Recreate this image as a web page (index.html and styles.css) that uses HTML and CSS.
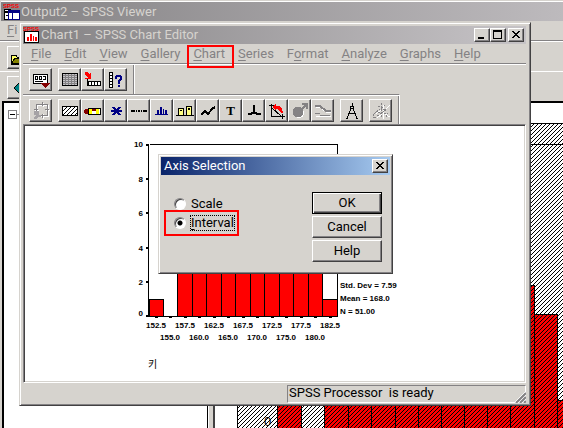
FILE: index.html
```html
<!DOCTYPE html>
<html lang="en">
<head>
<meta charset="utf-8">
<title>SPSS Viewer</title>
<link rel="stylesheet" href="styles.css">
</head>
<body>
<main class="viewer">
  <header class="titlebar">
    <svg class="app-icon" width="18" height="18" shape-rendering="crispEdges"><text class="logo-text" x="0" y="5">SPSS</text><path fill="#fff" stroke="#000" d="M1.500 6.500h6v10h-6z"/><path d="M2 8h4v2H2zM3 12h4v1H3z" fill="#000"/><path fill="#fff" stroke="#000084" d="M5.500 8.500h11v8h-11z"/><path fill="#000084" d="M5 7h12v3H5zM9 8h1v9H9z"/></svg>
    <h1>Output2 – SPSS Viewer</h1>
  </header>
  <nav class="viewer-menu"><button type="button"><u>F</u>i</button></nav>
  <div class="viewer-tools">
    <button type="button" class="tool" aria-label="Open"><svg width="18" height="18" shape-rendering="crispEdges"><path d="M1 6h5l1 2h6v7H1z" fill="#ffff63" stroke="#000"/><path d="M2 14l3-5h12l-3 5z" fill="#848200" stroke="#000"/></svg></button>
  </div>
  <div class="viewer-tools">
    <button type="button" class="tool" aria-label="Back"><svg width="18" height="18"><path d="M4 9l7-7v4h7v6h-7v4z" fill="#008284" stroke="#000"/></svg></button>
  </div>
  <div class="viewer-body">
    <aside class="outline"><svg width="14" height="24" shape-rendering="crispEdges"><path fill="none" stroke="#848284" d="M0.500 5.500h8v8h-8zM9 9.500h5"/><path stroke="#000" d="M2 9.500h5"/></svg></aside>
    <div class="splitter"></div>
    <section class="output">
      <svg width="100%" height="100%" shape-rendering="crispEdges">
        <defs><pattern id="hatch" width="4" height="4" patternUnits="userSpaceOnUse"><path d="M3 0h1v1H3zM2 1h1v1H2zM1 2h1v1H1zM0 3h1v1H0z"/></pattern></defs>
        <rect x="22" y="20" width="600" height="400" fill="#fff"/>
        <g fill="#f00" stroke="#000">
          <path d="M62.500 400V280.500h24V400M109.500 400V182.500h210V400M319.500 400V211.500h23V400M342.500 400V297.500h24V400M133.500 300V400M156.500 300V400M180.500 300V400M203.500 300V400M226.500 300V400M249.500 300V400M272.500 300V400M295.500 300V400"/>
        </g>
        <rect x="22" y="20" width="600" height="400" fill="url(#hatch)"/>
        <path d="M22.500 400V20.500H600M22 41.500H600" fill="none" stroke="#000"/>
        <text x="49" y="323" class="big-tick">0</text>
      </svg>
    </section>
  </div>
</main>

<section class="editor window" aria-label="Chart Editor">
  <header class="titlebar">
    <svg class="app-icon" width="18" height="18" shape-rendering="crispEdges"><text class="logo-text" x="0" y="5">SPSS</text><path fill="#fff" stroke="#000" d="M1.500 5.500h14v11h-14z"/><path fill="#f00" d="M4 11h2v4H4zM7 8h2v7H7zM10 10h1v5h-1zM12 11h2v4h-2z"/></svg>
    <h2>Chart1 – SPSS Chart Editor</h2>
    <div class="controls">
      <button type="button" class="cap" aria-label="Minimize"><svg width="12" height="10" shape-rendering="crispEdges"><path d="M2 7h6v2H2z"/></svg></button>
      <button type="button" class="cap" aria-label="Maximize"><svg width="12" height="10" shape-rendering="crispEdges"><path d="M1 0h9v9H1zM2 2v6h7V2z" fill-rule="evenodd"/></svg></button>
      <button type="button" class="cap close" aria-label="Close"><svg width="12" height="10" shape-rendering="crispEdges"><path d="M2 1h2v1H2zM8 1h2v1H8zM3 2h2v1H3zM7 2h2v1H7zM4 3h4v1H4zM5 4h2v1H5zM4 5h4v1H4zM3 6h2v1H3zM7 6h2v1H7zM2 7h2v1H2zM8 7h2v1H8z"/></svg></button>
    </div>
  </header>
  <nav class="menu">
    <button type="button"><u>F</u>ile</button><button type="button"><u>E</u>dit</button><button type="button"><u>V</u>iew</button><button type="button"><u>G</u>allery</button><button type="button" class="marked"><u>C</u>hart</button><button type="button"><u>S</u>eries</button><button type="button">F<u>o</u>rmat</button><button type="button"><u>A</u>nalyze</button><button type="button"><u>G</u>raphs</button><button type="button"><u>H</u>elp</button>
  </nav>
  <div class="toolbar first">
    <div class="group"><button type="button" class="tool" aria-label="Dialog recall"><svg width="18" height="18" shape-rendering="crispEdges"><path fill="#fff" stroke="#000" d="M1.500 3.500h14v9h-14z"/><path fill="none" stroke="#000" d="M3.500 5.500h2v3h-2zM7.500 5.500h2v3h-2zM11 5.500h2.500v3H11M3 10.500h8"/><path fill="#840000" d="M9 12h9l-4 5h-1z"/></svg></button></div>
    <div class="group">
      <button type="button" class="tool" aria-label="Data"><svg width="18" height="18" shape-rendering="crispEdges"><path fill="#c6c3c6" stroke="#000" d="M1.500 2.500h15v12h-15z"/><path stroke="#848284" fill="none" d="M2 4.500h14M2 6.500h14M2 8.500h14M2 10.500h14M2 12.500h14M4.500 3v11M7.500 3v11M10.500 3v11M13.500 3v11"/></svg></button>
      <button type="button" class="tool" aria-label="Go to case"><svg width="18" height="18" shape-rendering="crispEdges"><path fill="#f00" d="M1 1h2l3 3V2h1v6H1V7h3L1 3z"/><path fill="#fff" stroke="#000" d="M4.500 10.500h12v4h-12z"/><path stroke="#000" d="M3.500 8v7M7.500 11v4M10.500 11v4M13.500 11v4"/></svg></button>
      <button type="button" class="tool" aria-label="Variables"><svg width="18" height="18" shape-rendering="crispEdges"><path fill="#fff" stroke="#000" d="M2.500 1.500h3v15h-3zM2 4.500h4M2 7.500h4M2 10.500h4M2 13.500h4"/><path fill="#000084" d="M8 5h2v3H8zM9 4h5v2H9zM13 5h2v4h-2zM12 8h2v2h-2zM11 9h2v4h-2zM11 14h2v2h-2z"/></svg></button>
    </div>
  </div>
  <div class="toolbar second">
    <div class="group"><button type="button" class="tool" aria-label="Point selection"><svg width="18" height="18" shape-rendering="crispEdges"><path d="M5.500 3.500h11v11h-11zM11.500 1v4M11.500 12v5M3 8.500h4M14 8.500h4" fill="none" stroke="#fff"/><path d="M4.500 2.500h11v11h-11zM10.500 0v4M10.500 12v4M2 7.500h4M13 7.500h4" fill="none" stroke="#848284"/><path fill="#a5a2a5" d="M2 9h5v4h2v2H6l-1 2H2v-2l2-2H2z"/></svg></button></div>
    <div class="group">
      <button type="button" class="tool" aria-label="Fill pattern"><svg width="18" height="18" shape-rendering="crispEdges"><path fill="#fff" stroke="#000" d="M1.500 4.500h15v9h-15z"/><path stroke="#000" d="M2 9l4-4M2 13l8-8M6 13l8-8M10 13l6-6M14 13l2-2"/></svg></button>
      <button type="button" class="tool" aria-label="Color"><svg width="18" height="18" shape-rendering="crispEdges"><path fill="#840000" d="M1 7h3v5H1zM0 8h4v3H0z"/><path fill="#fff" stroke="#000" d="M4.500 6.500h12v6h-12z"/><path fill="#ffff00" d="M5 7h3v5H5zM12 7h3v5h-3z"/><path fill="#840000" d="M8 7h4v2H8z"/></svg></button>
      <button type="button" class="tool" aria-label="Marker"><svg width="18" height="18" shape-rendering="crispEdges"><path stroke="#000084" stroke-width="2" d="M4 9h11M6 5l7 8M13 5l-7 8"/></svg></button>
      <button type="button" class="tool" aria-label="Line style"><svg width="18" height="18" shape-rendering="crispEdges"><path d="M1 8h4v2H1zM6 8h1v2H6zM8 8h2v2H8zM11 8h1v2h-1zM13 8h4v2h-4z"/></svg></button>
      <button type="button" class="tool" aria-label="Bar style"><svg width="18" height="18" shape-rendering="crispEdges"><path fill="#000084" d="M2 12h13v1H2zM4 8h2v4H4zM7 5h2v7H7zM10 7h1v5h-1zM12 8h2v4h-2z"/></svg></button>
      <button type="button" class="tool" aria-label="Bar labels"><svg width="18" height="18" shape-rendering="crispEdges"><path fill="#ffff84" stroke="#000" d="M2.500 6.500h5v7h-5zM10.500 4.500h5v9h-5zM0 13.500h18"/><path fill="#000" d="M4 8h2v1H4zM12 6h2v2h-2z"/></svg></button>
      <button type="button" class="tool" aria-label="Interpolation"><svg width="18" height="18" shape-rendering="crispEdges"><path fill="none" stroke="#000" stroke-width="2" d="M2 13l4-4 3 3 4-5 3-2"/></svg></button>
      <button type="button" class="tool letter" aria-label="Text">T</button>
      <button type="button" class="tool" aria-label="3-D rotation"><svg width="18" height="18" shape-rendering="crispEdges"><path fill="none" stroke="#000" stroke-width="2" d="M9 3v7M9 10l-3 2H3M9 10l3 2h4"/></svg></button>
      <button type="button" class="tool" aria-label="Swap axes"><svg width="18" height="18" shape-rendering="crispEdges"><path fill="none" stroke="#000" d="M3.500 2v12.500H17M1 3.500h5M14.500 12v5M4 6l9 8"/><path fill="#f00" d="M4 5l4-4v3h3l3 3 1 4h-2l-2-3-3-1v2z"/></svg></button>
      <button type="button" class="tool" aria-label="Explode slice"><svg width="18" height="18" shape-rendering="crispEdges"><circle cx="8" cy="11" r="5" fill="#fff"/><circle cx="7" cy="10" r="5.500" fill="#848284"/><path stroke="#848284" stroke-width="2" fill="none" d="M10 8l5-5M11 2h5v5"/></svg></button>
      <button type="button" class="tool" aria-label="Break line"><svg width="18" height="18" shape-rendering="crispEdges"><path d="M2 5h4l6 5h5M2 14.500h15" stroke="#fff" fill="none"/><path stroke="#848284" stroke-width="2" fill="none" d="M1 4h5l6 5h5"/><path stroke="#848284" d="M1 11.500h5M6 13.500h10"/></svg></button>
    </div>
    <div class="group"><button type="button" class="tool" aria-label="Chart options"><svg width="18" height="18" shape-rendering="crispEdges"><path fill="none" stroke="#000" d="M9.500 1v3M7.500 4.500h3v2h-3zM8 7L4 16M10 7l4 9M3 16.500h2M13 16.500h2M6 11.500h7"/></svg></button></div>
    <div class="group"><button type="button" class="tool" aria-label="Spin"><svg width="18" height="18" shape-rendering="crispEdges"><path fill="none" stroke="#fff" d="M11 3v14M4 12l5-4M14 7l4-4M5 16l5-4M13 12l5 3"/><path fill="none" stroke="#848284" stroke-dasharray="2 1" d="M9.500 1v15M6 4l7 4M13 3L2 12M6 10l10 2M3 16l12-9M14 15l2-3M1 12v3h3"/></svg></button></div>
  </div>
  <div class="canvas">
    <svg width="100%" height="100%" role="img" aria-label="Histogram">
      <g shape-rendering="crispEdges" stroke="#000" fill="none">
        <path d="M124.500 19.500H312.500V191.500"/>
        <path fill="#f00" d="M124.500 191.500v-17h14v17M152.500 191.500V110.500h145v81M297.500 191.500v-17h15v17"/>
        <path d="M167.500 110v81M181.500 110v81M196.500 110v81M210.500 110v81M225.500 110v81M239.500 110v81M254.500 110v81M268.500 110v81M283.500 110v81"/>
        <path d="M123.500 19v173M123 191.500h190"/>
        <path stroke-width="2" d="M121 20h3M121 54h3M121 88h3M121 123h3M121 157h3M121 191h3M130 192h3M144 192h3M159 192h3M173 192h3M188 192h3M202 192h3M217 192h3M231 192h3M246 192h3M260 192h3M275 192h3M289 192h3M304 192h3"/>
      </g>
      <g class="tick end"><text x="118" y="22">10</text><text x="118" y="57">8</text><text x="118" y="91">6</text><text x="118" y="126">4</text><text x="118" y="160">2</text><text x="118" y="191">0</text></g>
      <g class="tick mid">
        <text x="131" y="203">152.5</text><text x="160" y="203">157.5</text><text x="189" y="203">162.5</text><text x="218" y="203">167.5</text><text x="247" y="203">172.5</text><text x="276" y="203">177.5</text><text x="305" y="203">182.5</text>
        <text x="145" y="215">155.0</text><text x="174" y="215">160.0</text><text x="203" y="215">165.0</text><text x="232" y="215">170.0</text><text x="261" y="215">175.0</text><text x="290" y="215">180.0</text>
      </g>
      <g class="tick"><text x="315" y="163">Std. Dev = 7.59</text><text x="315" y="176">Mean = 168.0</text><text x="315" y="189">N = 51.00</text></g>
      <text class="variable" x="123" y="243">키</text>
    </svg>
  </div>
  <footer class="status"><p>SPSS Processor&nbsp; is ready</p>
    <svg class="grip" width="12" height="12"><path stroke="#fff" d="M0 12L12 0M4 12l8-8M8 12l4-4"/><path stroke="#848284" stroke-width="2" d="M2 12L12 2M6 12l6-6M10 12l2-2"/></svg>
  </footer>
</section>

<form class="dialog window" aria-label="Axis Selection">
  <header class="titlebar active">
    <h2>Axis Selection</h2>
    <button type="button" class="cap" aria-label="Close"><svg width="12" height="10" shape-rendering="crispEdges"><path d="M2 1h2v1H2zM8 1h2v1H8zM3 2h2v1H3zM7 2h2v1H7zM4 3h4v1H4zM5 4h2v1H5zM4 5h4v1H4zM3 6h2v1H3zM7 6h2v1H7zM2 7h2v1H2zM8 7h2v1H8z"/></svg></button>
  </header>
  <div class="dialog-body">
    <div class="options">
      <label><input type="radio" name="axis"><span>Scale</span></label>
      <label class="marked"><input type="radio" name="axis" checked><span class="focus"><u>I</u>nterval</span></label>
    </div>
    <div class="actions">
      <button type="button" class="default">OK</button>
      <button type="button">Cancel</button>
      <button type="button">Help</button>
    </div>
  </div>
</form>
</body>
</html>
```
FILE: styles.css
```css
:root {
  --face: #d6d3ce;
  --shadow: #848284;
  --dark: #424142;
  --mark: #f00;
}
* { box-sizing: border-box; }
html, body { height: 100%; }
body {
  margin: 0;
  overflow: hidden;
  background: var(--face);
  font: 13px/16px Roboto, "Noto Sans CJK KR", sans-serif;
  color: #000;
}
h1, h2, p { margin: 0; font-size: 13px; font-weight: 400; }
button {
  margin: 0;
  padding: 0;
  border: 0;
  background: none;
  font: inherit;
  color: inherit;
}
svg { display: block; }
u { text-underline-offset: 2px; }

.titlebar {
  display: flex;
  align-items: center;
  height: 18px;
  flex: none;
  padding-right: 2px;
  background: linear-gradient(90deg, #848284, #c6c3c6);
  color: var(--face);
}
.titlebar.active {
  background: linear-gradient(90deg, #0a246a, #a6caf0);
  color: #fff;
  padding-left: 3px;
}
.titlebar h1, .titlebar h2 { flex: 1; white-space: nowrap; }
.app-icon { flex: none; }
.logo-text { font: bold 6px "Liberation Sans", sans-serif; fill: #f00; }

.viewer { height: 100%; display: flex; flex-direction: column; border-top: 1px solid var(--face); }
.viewer > .titlebar {
  height: 20px;
  border-top: 1px solid #fff;
  margin-left: 1px;
  padding-left: 2px;
  background: linear-gradient(90deg, #848284, #bdbabd);
}
.viewer-menu {
  height: 21px;
  flex: none;
  padding: 1px 7px;
  color: var(--shadow);
  border-bottom: 1px solid #fff;
  box-shadow: inset 0 -1px var(--shadow);
}
.viewer-tools { height: 29px; flex: none; padding: 4px 7px; }
.viewer-tools + .viewer-tools { border-top: 1px solid #fff; height: 30px; }
.viewer-body { flex: 1; min-height: 0; display: flex; border-top: 2px solid #000; margin-left: 2px; }
.outline { width: 205px; background: #fff; border-left: 2px solid #000; padding: 2px 4px; }
.splitter { width: 8px; background: var(--face); border-left: 1px solid #000; border-right: 2px solid var(--dark); box-shadow: inset 1px 0 #fff; }
.output { flex: 1; min-width: 0; background: #fff; }
.big-tick { font: 13px "Liberation Sans", sans-serif; }

.window {
  position: absolute;
  background: var(--face);
  border: 1px solid;
  border-color: var(--face) var(--dark) var(--dark) var(--face);
  box-shadow: inset 1px 1px #fff, inset -1px -1px var(--shadow);
}
.editor {
  left: 19px;
  top: 22px;
  right: 32px;
  bottom: 22px;
  padding: 3px 4px 2px 3px;
  display: flex;
  flex-direction: column;
}
.controls { display: flex; }
.cap {
  display: grid;
  place-items: center;
  width: 16px;
  height: 14px;
  background: var(--face);
  border: 1px solid;
  border-color: #fff var(--dark) var(--dark) #fff;
  box-shadow: inset -1px -1px var(--shadow);
}
.close { margin-left: 2px; }

.menu {
  display: flex;
  gap: 13px;
  height: 21px;
  flex: none;
  padding: 2px 8px;
  color: var(--shadow);
  border-bottom: 1px solid #fff;
  box-shadow: inset 0 -1px var(--shadow);
}
.marked { position: relative; }
.marked::after {
  content: "";
  position: absolute;
  inset: -1px -9px -6px -6px;
  border: 2px solid var(--mark);
  z-index: 1;
}

.toolbar { display: flex; gap: 6px; flex: none; padding: 3px 6px; }
.toolbar.first {
  height: 29px;
  align-self: flex-start;
  width: 376px;
  background: linear-gradient(90deg, transparent 110px, var(--shadow) 110px 111px, #fff 111px 112px, transparent 112px) no-repeat 0 0;
}
.toolbar.second {
  align-self: flex-start;
  border-top: 1px solid var(--shadow);
  border-right: 1px solid #fff;
  box-shadow: inset 0 1px #fff, inset -1px 0 var(--shadow);
  padding: 4px 7px 2px 6px;
}
.group { display: flex; }
.tool {
  display: grid;
  place-items: center;
  width: 23px;
  height: 23px;
  border: 1px solid;
  border-color: #fff var(--dark) var(--dark) #fff;
  box-shadow: inset -1px -1px var(--shadow);
}
.letter { font: bold 13px "Liberation Serif", serif; }

.canvas {
  flex: 1;
  min-height: 0;
  background: #fff;
  border: 1px solid;
  border-color: var(--shadow) #fff #fff var(--shadow);
  box-shadow: inset 1px 1px var(--dark), inset -1px -1px var(--face);
  padding-left: 1px;
}
.tick { font: bold 8px "Liberation Sans", sans-serif; }
.end { text-anchor: end; }
.mid { text-anchor: middle; }
.variable { font: 10px "Noto Sans CJK KR", sans-serif; }

.status { display: flex; height: 20px; flex: none; padding-top: 2px; }
.status p {
  margin-left: auto;
  width: 239px;
  border: 1px solid;
  border-color: var(--shadow) #fff #fff var(--shadow);
  padding-left: 1px;
  line-height: 14px;
}
.grip { align-self: flex-end; margin-left: -12px; }

.dialog { left: 158px; top: 154px; width: 235px; padding: 2px 2px 10px; }
.dialog-body { display: flex; justify-content: space-between; padding: 17px 8px 1px 13px; }
.options { display: flex; flex-direction: column; align-items: flex-start; gap: 3px; padding-top: 4px; }
.options label { display: flex; align-items: center; gap: 4px; }
.options input {
  appearance: none;
  width: 12px;
  height: 12px;
  margin: 0;
  border: 1px solid;
  border-color: var(--shadow) #fff #fff var(--shadow);
  border-radius: 50%;
  background: #fff;
  box-shadow: inset 1px 1px var(--dark);
}
.options input:checked { background: radial-gradient(circle, #000 2px, #fff 3px); }
.options span { padding: 0 1px; }
.options .focus { outline: 1px dotted #000; outline-offset: -1px; }
.options .marked::after { inset: -5px -4px -5px -10px; }
.actions { display: flex; flex-direction: column; gap: 2px; }
.actions button {
  width: 70px;
  height: 22px;
  border: 1px solid;
  border-color: #fff var(--dark) var(--dark) #fff;
  box-shadow: inset -1px -1px var(--shadow);
}
.actions .default { border-color: #000; box-shadow: inset 1px 1px #fff, inset -1px -1px var(--dark), inset -2px -2px var(--shadow); }
```
